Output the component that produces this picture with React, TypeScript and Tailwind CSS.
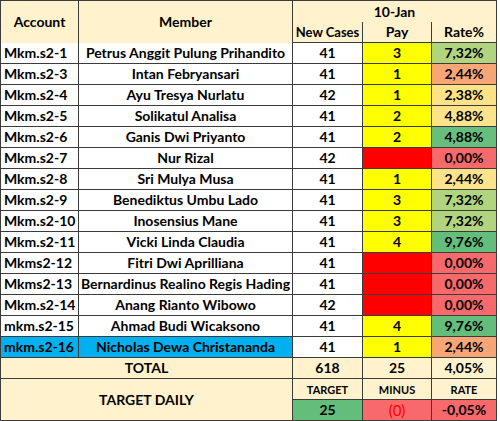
import React from 'react';

const rows = [
  { account: "Mkm.s2-1", member: "Petrus Anggit Pulung Prihandito", cases: 41, pay: "3", rate: "7,32%", rateBg: "bg-[#b1d47f]" },
  { account: "Mkm.s2-3", member: "Intan Febryansari", cases: 41, pay: "1", rate: "2,44%", rateBg: "bg-[#f9a677]" },
  { account: "Mkm.s2-4", member: "Ayu Tresya Nurlatu", cases: 42, pay: "1", rate: "2,38%", rateBg: "bg-[#ffe285]" },
  { account: "Mkm.s2-5", member: "Solikatul Analisa", cases: 41, pay: "2", rate: "4,88%", rateBg: "bg-[#ffe38a]" },
  { account: "Mkm.s2-6", member: "Ganis Dwi Priyanto", cases: 41, pay: "2", rate: "4,88%", rateBg: "bg-[#66bf7c]" },
  { account: "Mkm.s2-7", member: "Nur Rizal", cases: 42, pay: "", rate: "0,00%", rateBg: "bg-[#f8696b]" },
  { account: "Mkm.s2-8", member: "Sri Mulya Musa", cases: 41, pay: "1", rate: "2,44%", rateBg: "bg-[#ffe38a]" },
  { account: "Mkm.s2-9", member: "Benediktus Umbu Lado", cases: 41, pay: "3", rate: "7,32%", rateBg: "bg-[#b1d47f]" },
  { account: "Mkm.s2-10", member: "Inosensius Mane", cases: 41, pay: "3", rate: "7,32%", rateBg: "bg-[#b1d47f]" },
  { account: "Mkm.s2-11", member: "Vicki Linda Claudia", cases: 41, pay: "4", rate: "9,76%", rateBg: "bg-[#63be7b]" },
  { account: "Mkms2-12", member: "Fitri Dwi Aprilliana", cases: 41, pay: "", rate: "0,00%", rateBg: "bg-[#f8696b]" },
  { account: "Mkms2-13", member: "Bernardinus Realino Regis Hading", cases: 41, pay: "", rate: "0,00%", rateBg: "bg-[#f8696b]" },
  { account: "Mkm.s2-14", member: "Anang Rianto Wibowo", cases: 42, pay: "", rate: "0,00%", rateBg: "bg-[#f8696b]" },
  { account: "mkm.s2-15", member: "Ahmad Budi Wicaksono", cases: 41, pay: "4", rate: "9,76%", rateBg: "bg-[#63be7b]" },
  { account: "mkm.s2-16", member: "Nicholas Dewa Christananda", cases: 41, pay: "1", rate: "2,44%", rateBg: "bg-[#f9a677]", highlight: true },
];

const cell = "flex items-center justify-center";

export default function App() {
  return (
    <div className="w-[500px] h-[421px] bg-white overflow-hidden" style={{ fontFamily: "Lato, 'Liberation Sans', sans-serif" }}>
      <div className="grid w-[497px] grid-cols-[77px_213px_69px_68px_64px] auto-rows-[20px] gap-px p-px bg-[#3b3b3b] text-[14px] font-bold text-black leading-none">
        {/* header */}
        <div className={`${cell} row-span-2 bg-[#fff2cc] h-[42px]`}>Account</div>
        <div className={`${cell} row-span-2 bg-[#fff2cc] h-[42px]`}>Member</div>
        <div className={`${cell} col-span-3 bg-[#fff2cc] h-[21px]`}>10-Jan</div>
        <div className={`${cell} bg-[#fff2cc] whitespace-nowrap text-[13px]`}>New Cases</div>
        <div className={`${cell} bg-[#fff2cc]`}>Pay</div>
        <div className={`${cell} bg-[#fff2cc]`}>Rate%</div>

        {rows.map((r) => (
          <React.Fragment key={r.account}>
            <div className={`flex items-center pl-[3px] ${r.highlight ? "bg-[#00b0f0]" : "bg-white"}`}>{r.account}</div>
            <div className={`${cell} whitespace-nowrap ${r.highlight ? "bg-[#00b0f0]" : "bg-white"}`}>{r.member}</div>
            <div className={`${cell} bg-white`}>{r.cases}</div>
            <div className={`${cell} ${r.pay ? "bg-[#ffff00]" : "bg-[#ff0000]"}`}>{r.pay}</div>
            <div className={`${cell} ${r.rateBg}`}>{r.rate}</div>
          </React.Fragment>
        ))}

        {/* total */}
        <div className={`${cell} col-span-2 bg-[#fff2cc]`}>TOTAL</div>
        <div className={`${cell} bg-[#fff2cc]`}>618</div>
        <div className={`${cell} bg-[#fff2cc]`}>25</div>
        <div className={`${cell} bg-[#fff2cc]`}>4,05%</div>

        {/* target daily */}
        <div className={`${cell} col-span-2 row-span-2 bg-[#fff2cc]`}>TARGET DAILY</div>
        <div className={`${cell} bg-[#fff2cc] text-[11px]`}>TARGET</div>
        <div className={`${cell} bg-[#fff2cc] text-[11px]`}>MINUS</div>
        <div className={`${cell} bg-[#fff2cc] text-[11px]`}>RATE</div>
        <div className={`${cell} bg-[#63be7b]`}>25</div>
        <div className={`${cell} bg-[#f8696b] text-[#ff0000] font-normal text-[15px]`}>(0)</div>
        <div className={`${cell} bg-[#f8696b]`}>-0,05%</div>
      </div>
    </div>
  );
}
